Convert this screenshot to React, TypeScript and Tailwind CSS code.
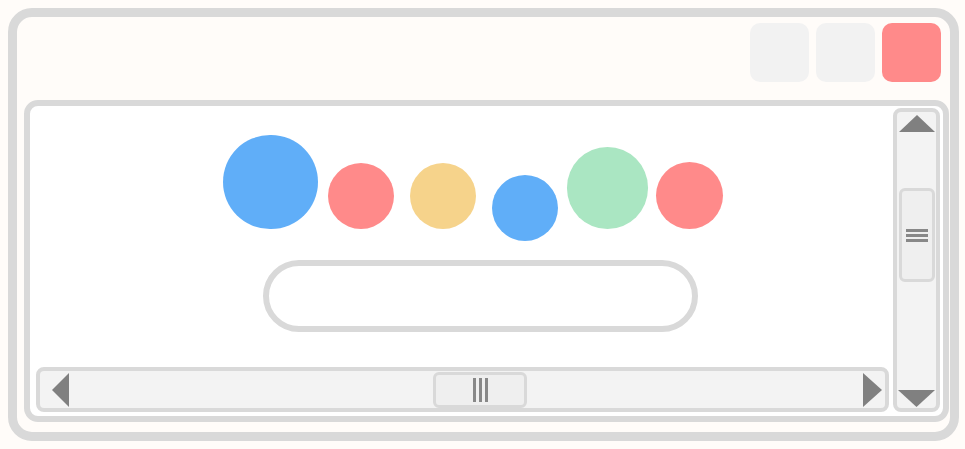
import React from "react";

function Tri({ dir, w, h }: { dir: "up" | "down" | "left" | "right"; w: number; h: number }) {
  let pts = "";
  if (dir === "up") pts = `0,${h} ${w / 2},0 ${w},${h}`;
  if (dir === "down") pts = `0,0 ${w},0 ${w / 2},${h}`;
  if (dir === "left") pts = `${w},0 0,${h / 2} ${w},${h}`;
  if (dir === "right") pts = `0,0 ${w},${h / 2} 0,${h}`;
  return (
    <svg width={w} height={h} viewBox={`0 0 ${w} ${h}`} className="block shrink-0">
      <polygon points={pts} fill="#808080" />
    </svg>
  );
}

export default function App() {
  return (
    <div className="w-[965px] h-[449px] bg-[#fffcf9] pt-2 pl-2 overflow-hidden" style={{ fontFamily: '"Liberation Sans", sans-serif' }}>
      <div className="w-[951px] h-[433px] border-[9px] border-[#d9d9d9] rounded-[24px] bg-[#fffcf9] flex flex-col">
        {/* title bar */}
        <div className="flex justify-end gap-[7px] pt-[6px] pr-[9px]">
          <div className="w-[59px] h-[59px] rounded-[10px] bg-[#f2f2f2]" />
          <div className="w-[59px] h-[59px] rounded-[10px] bg-[#f2f2f2]" />
          <div className="w-[59px] h-[59px] rounded-[10px] bg-[#ff8a8a]" />
        </div>
        {/* panel */}
        <div className="mt-[18px] ml-[7px] w-[925px] h-[322px] border-[6px] border-[#d9d9d9] rounded-[14px] bg-white flex">
          {/* left column */}
          <div className="flex-1 flex flex-col pl-[6px] pb-[4px]">
            <div className="flex items-end pt-[29px] ml-[187px]">
              <div className="w-[95px] h-[94px] rounded-full bg-[#60aef8] shrink-0" />
              <div className="ml-[10px] w-[66px] h-[66px] rounded-full bg-[#ff8a8a] shrink-0" />
              <div className="ml-[16px] w-[66px] h-[66px] rounded-full bg-[#f6d38b] shrink-0" />
              <div className="ml-[16px] w-[66px] h-[66px] rounded-full bg-[#60aef8] shrink-0 translate-y-[12px]" />
              <div className="ml-[9px] w-[81px] h-[82px] rounded-full bg-[#aae6c2] shrink-0" />
              <div className="ml-[8px] w-[67px] h-[67px] rounded-full bg-[#ff8a8a] shrink-0" />
            </div>
            <div className="mt-[31px] ml-[227px] w-[435px] h-[72px] rounded-full border-[6px] border-[#d9d9d9] bg-white" />
            {/* horizontal scrollbar */}
            <div className="mt-auto h-[45px] border-[4px] border-[#d9d9d9] rounded-[8px] bg-[#f3f3f3] flex items-center">
              <div className="ml-[12px]">
                <Tri dir="left" w={17} h={34} />
              </div>
              <div className="ml-[364px] w-[94px] h-[36px] border-[3px] border-[#d9d9d9] rounded-[6px] bg-[#efefef] flex items-center justify-center gap-[3px]">
                <div className="w-[3px] h-[24px] bg-[#888888]" />
                <div className="w-[3px] h-[24px] bg-[#888888]" />
                <div className="w-[3px] h-[24px] bg-[#888888]" />
              </div>
              <div className="ml-auto mr-[3px]">
                <Tri dir="right" w={19} h={34} />
              </div>
            </div>
          </div>
          {/* vertical scrollbar */}
          <div className="ml-[4px] mr-[3px] mt-[2px] mb-[4px] w-[47px] border-[4px] border-[#d9d9d9] rounded-[8px] bg-[#f3f3f3] flex flex-col items-center">
            <div className="mt-[3px]">
              <Tri dir="up" w={36} h={17} />
            </div>
            <div className="mt-[56px] w-[36px] h-[94px] border-[3px] border-[#d9d9d9] rounded-[6px] bg-[#efefef] flex flex-col items-center justify-center gap-[2px]">
              <div className="w-[22px] h-[3px] bg-[#888888]" />
              <div className="w-[22px] h-[3px] bg-[#888888]" />
              <div className="w-[22px] h-[3px] bg-[#888888]" />
            </div>
            <div className="mt-auto mb-[1px]">
              <Tri dir="down" w={37} h={17} />
            </div>
          </div>
        </div>
      </div>
    </div>
  );
}
